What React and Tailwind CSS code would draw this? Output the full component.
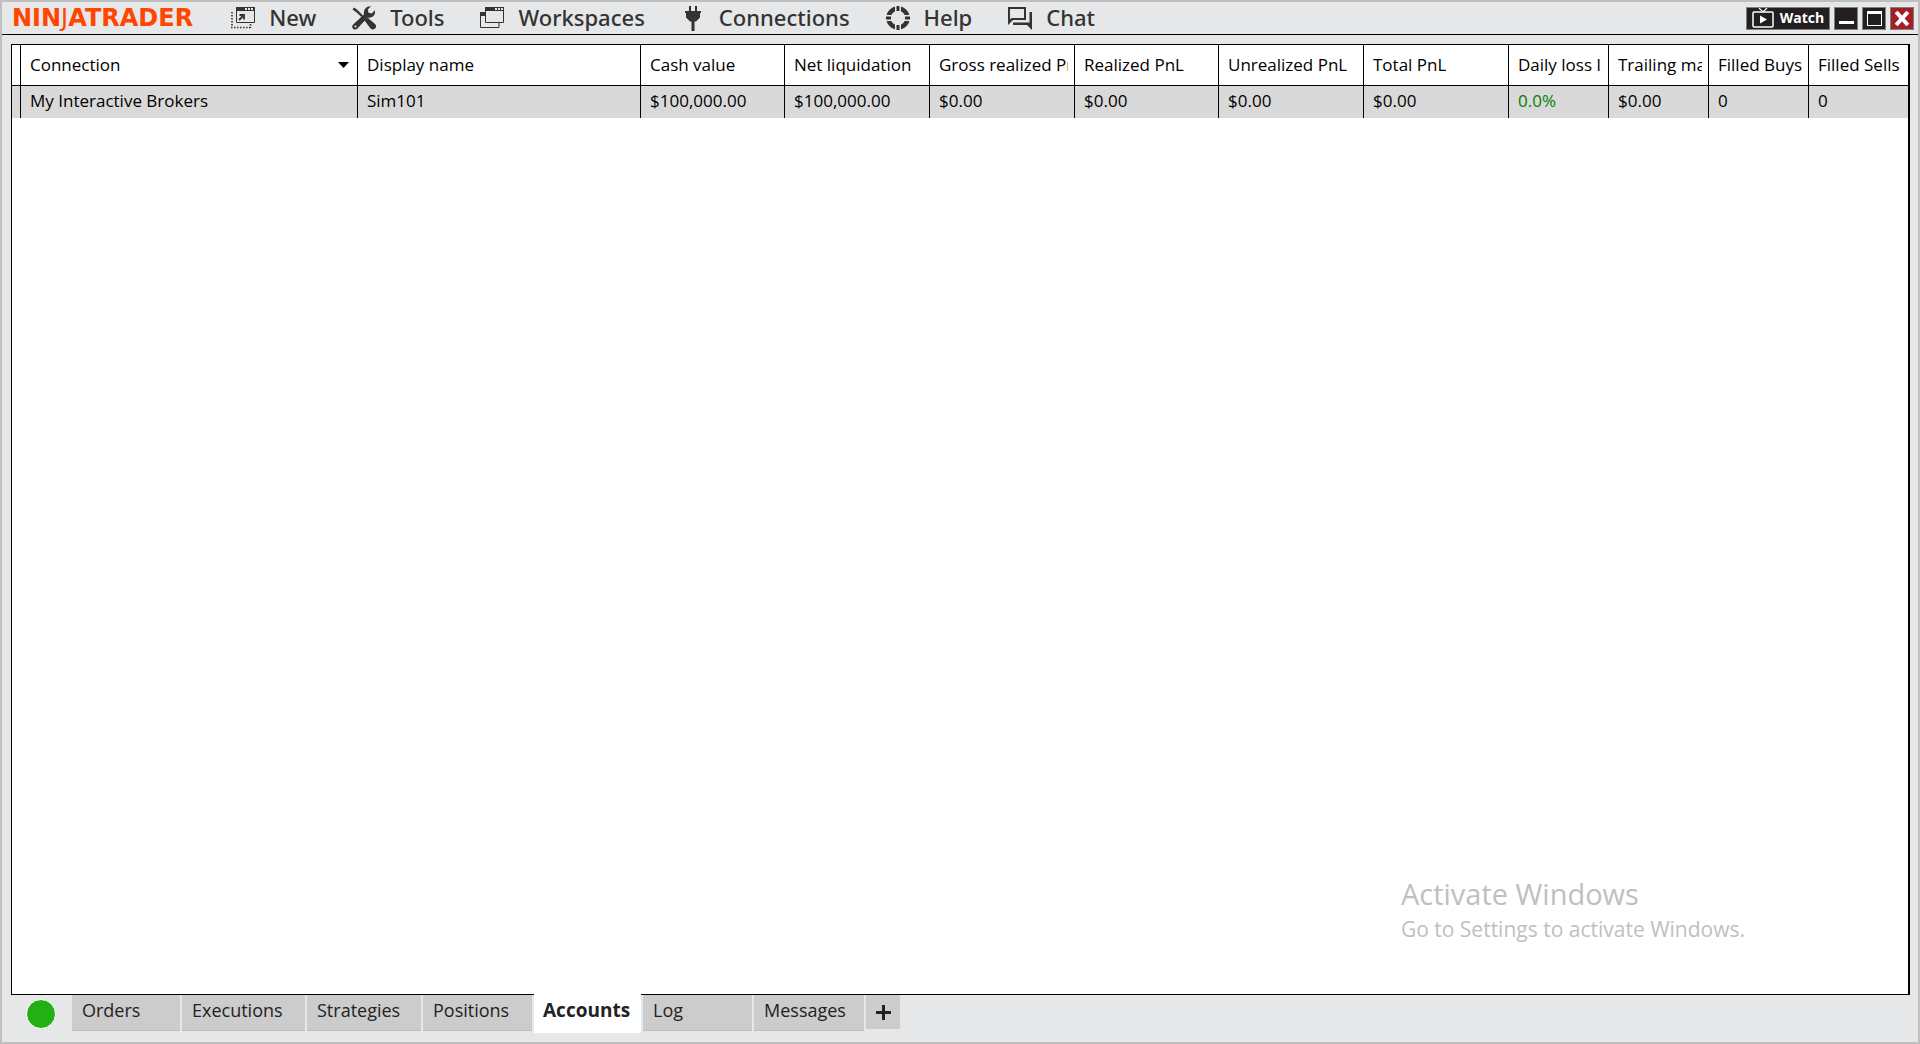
import { useState } from 'react';

function NewIcon() {
  return (
    <svg width="24" height="22" viewBox="0 0 24 22" fill="none" aria-hidden="true">
      <path d="M5.500 1v14.500h18V1z" stroke="#333" />
      <path d="M5 0h19v4H5z" fill="#333" />
      <path d="M14 1h2v2h-2zM17 1h2v2h-2zM20 1h2v2h-2z" fill="#e6e7e8" />
      <path d="M8 13l4.500-4.500M8.500 8H13v4.500" stroke="#333" strokeWidth="1.800" />
      <path d="M1 5v15M0 20.500h20M19.500 17v4" stroke="#333" strokeWidth="1.600" strokeDasharray="1.500 1.500" />
    </svg>
  );
}

function ToolsIcon() {
  return (
    <svg width="24" height="24" viewBox="0 0 24 24" aria-hidden="true">
      <path d="M.5 3.500L2 1.500l3 2L11 9.500l-1.500 1.500L4 6z" fill="#333" />
      <path d="M12.500 14.500l3-3 7.500 6.500a3.100 3.100 0 0 1-4.500 4.500z" fill="#333" />
      <path d="M1.200 18.500L12 8.500C11 4 14.500-.5 19 .3L15.800 3.500l.7 3.200 3.300.8 3-3.200C24.200 8.800 20 12.800 15.500 11.500L5.500 22.600C2.500 25.500-1.800 21.500 1.200 18.500z" fill="#333" />
      <circle cx="3.500" cy="20.500" r="1.100" fill="#e6e7e8" />
    </svg>
  );
}

function WorkspacesIcon() {
  return (
    <svg width="24" height="22" viewBox="0 0 24 22" fill="none" aria-hidden="true">
      <path d="M5 5.500H.5v15h18.500V16" stroke="#333" />
      <path d="M0 5h5v4H0z" fill="#333" />
      <path d="M5.500 1v14.500h18V1z" stroke="#333" />
      <path d="M5 0h19v4H5z" fill="#333" />
      <path d="M15 1h2v2h-2zM18 1h2v2h-2zM21 1h2v2h-2z" fill="#e6e7e8" />
    </svg>
  );
}

function ConnectionsIcon() {
  return (
    <svg width="24" height="25" viewBox="0 0 24 25" fill="#333" aria-hidden="true">
      <path d="M8 0h2v5H8zM14 0h2v5h-2z" />
      <path d="M4 5h16v2h-1v4.500l-4 4h-1.500V25h-3v-9.500H9l-4-4V7H4z" />
    </svg>
  );
}

function HelpIcon() {
  return (
    <svg width="24" height="24" viewBox="0 0 24 24" fill="none" aria-hidden="true">
      <circle cx="12" cy="12" r="9.500" stroke="#333" strokeWidth="4.500" />
      <path d="M12 0v24M0 12h24" stroke="#e6e7e8" strokeWidth="6" />
      <path d="M12 0v5M12 19v5M0 12h5M19 12h5" stroke="#333" strokeWidth="3" />
    </svg>
  );
}

function ChatIcon() {
  return (
    <svg width="24" height="23" viewBox="0 0 24 23" fill="#333" aria-hidden="true">
      <path d="M0 0h18v13H5l-5 5zM2 2v10.500L3.500 11H16V2z" fillRule="evenodd" />
      <path d="M21.500 5H24v18l-5-5H5v-2.500h16.500z" />
    </svg>
  );
}

const menuItems = [
  { label: 'New', Icon: NewIcon },
  { label: 'Tools', Icon: ToolsIcon },
  { label: 'Workspaces', Icon: WorkspacesIcon },
  { label: 'Connections', Icon: ConnectionsIcon },
  { label: 'Help', Icon: HelpIcon },
  { label: 'Chat', Icon: ChatIcon },
];

const columns = [
  { label: 'Connection', value: 'My Interactive Brokers', width: '', sorted: true },
  { label: 'Display name', value: 'Sim101', width: 'w-[283px]' },
  { label: 'Cash value', value: '$100,000.00', width: 'w-[144px]' },
  { label: 'Net liquidation', value: '$100,000.00', width: 'w-[145px]' },
  { label: 'Gross realized PnL', value: '$0.00', width: 'w-[145px]' },
  { label: 'Realized PnL', value: '$0.00', width: 'w-[144px]' },
  { label: 'Unrealized PnL', value: '$0.00', width: 'w-[145px]' },
  { label: 'Total PnL', value: '$0.00', width: 'w-[145px]' },
  { label: 'Daily loss limit', value: '0.0%', width: 'w-[100px]', positive: true },
  { label: 'Trailing max', value: '$0.00', width: 'w-[100px]' },
  { label: 'Filled Buys', value: '0', width: 'w-[100px]' },
  { label: 'Filled Sells', value: '0', width: 'w-[99px]', last: true },
];

const tabs = [
  { label: 'Orders', width: 'w-[108px]' },
  { label: 'Executions', width: 'w-[123px]' },
  { label: 'Strategies', width: 'w-[114px]' },
  { label: 'Positions', width: 'w-[109px]' },
  { label: 'Accounts', width: 'w-[107px]' },
  { label: 'Log', width: 'w-[109px]' },
  { label: 'Messages', width: 'w-[110px]' },
];

function TitleBar() {
  return (
    <header className="flex h-[33px] shrink-0 items-center border-b border-black pl-2.5 pr-1">
      <h1 className="flex items-baseline font-['DejaVu_Sans'] text-2xl leading-8 font-bold text-[#ff4500]">
        NIN<span className="font-normal">J</span>ATRADER
      </h1>
      <nav className="ml-[38px] flex flex-1 gap-9">
        {menuItems.map(({ label, Icon }) => (
          <button key={label} type="button" className="flex items-center gap-3.5 font-['Noto_Sans'] text-[22px] leading-7 font-medium text-[#333]">
            <Icon />
            <span className="pb-0.5">{label}</span>
          </button>
        ))}
      </nav>
      <WindowControls />
    </header>
  );
}

function WindowControls() {
  return (
    <div className="flex gap-1">
      <button type="button" className="flex h-[23px] w-[84px] items-center justify-center gap-1.5 border border-[#808080] bg-[#231f20] text-sm font-bold text-white">
        <svg width="22" height="20" viewBox="0 0 22 20" fill="none" stroke="white" aria-hidden="true">
          <path d="M7 0l4 4 4-4" strokeWidth="1.200" />
          <rect x="1" y="4" width="20" height="15" rx="1" strokeWidth="1.500" />
          <path d="M8 7.500v8l7-4z" fill="white" stroke="none" />
        </svg>
        Watch
      </button>
      <button type="button" aria-label="Minimize" className="h-[23px] w-6 border border-[#808080] bg-[#231f20]">
        <svg width="22" height="21" viewBox="0 0 22 21" aria-hidden="true">
          <path d="M4 13h15v3H4z" fill="white" />
        </svg>
      </button>
      <button type="button" aria-label="Maximize" className="h-[23px] w-6 border border-[#808080] bg-[#231f20]">
        <svg width="22" height="21" viewBox="0 0 22 21" aria-hidden="true">
          <path d="M4 3h15v15H4zM5 6v11h13V6z" fill="white" fillRule="evenodd" />
        </svg>
      </button>
      <button type="button" aria-label="Close" className="h-[23px] w-6 border border-[#808080] bg-[#a61e24]">
        <svg width="22" height="21" viewBox="0 0 22 21" aria-hidden="true">
          <path d="M6.500 5.500l9 10M15.500 5.500l-9 10" stroke="white" strokeWidth="4" strokeLinecap="square" />
        </svg>
      </button>
    </div>
  );
}

function AccountsTable() {
  return (
    <table className="w-full table-fixed border-separate border-spacing-0 text-left text-[17px] leading-6">
      <thead>
        <tr className="h-[41px]">
          <th aria-label="Row marker" className="w-[9px] border-r border-b border-black p-0" />
          {columns.map((col) => (
            <th
              key={col.label}
              className={`border-b border-black py-0 pr-1.5 pl-[9px] font-normal ${col.width} ${col.last ? '' : 'border-r'}`}
            >
              <div className="flex items-center justify-between">
                <span className="overflow-hidden whitespace-nowrap">{col.label}</span>
                {col.sorted && (
                  <svg className="mr-0.5" width="11" height="6" viewBox="0 0 11 6" aria-hidden="true">
                    <path d="M0 0h11L5.500 6z" />
                  </svg>
                )}
              </div>
            </th>
          ))}
        </tr>
      </thead>
      <tbody>
        <tr className="h-8 bg-[#d9d9d9]">
          <td className="border-r border-black p-0" />
          {columns.map((col) => (
            <td
              key={col.label}
              className={`border-black px-[9px] pt-0 pb-0.5 whitespace-nowrap ${col.positive ? 'text-[#008000]' : ''} ${col.last ? '' : 'border-r'}`}
            >
              {col.value}
            </td>
          ))}
        </tr>
      </tbody>
    </table>
  );
}

function TabBar({ active, onSelect }) {
  return (
    <footer className="flex h-[47px] shrink-0 items-start pl-6">
      <span role="img" aria-label="Connected" className="mt-1 mr-4 size-[30px] rounded-full border border-white bg-[#22b014]" />
      <div role="tablist" className="flex gap-0.5">
        {tabs.map((tab) => {
          const isActive = tab.label === active;
          return (
            <button
              key={tab.label}
              type="button"
              role="tab"
              aria-selected={isActive}
              onClick={() => onSelect(tab.label)}
              className={`pb-1.5 text-left text-[#222] ${tab.width} ${
                isActive ? '-mt-px h-[39px] bg-white pl-[9px] text-[19px] font-bold' : 'h-9 border-b border-[#bfbfbf] bg-[#ccc] pl-2.5 text-lg'
              }`}
            >
              {tab.label}
            </button>
          );
        })}
      </div>
      <button type="button" aria-label="Add tab" className="ml-0.5 flex h-[34px] w-[34px] items-center justify-center bg-[#ccc]">
        <svg width="15" height="15" viewBox="0 0 15 15" aria-hidden="true">
          <path d="M6 0h3v6h6v3H9v6H6V9H0V6h6z" fill="#222" />
        </svg>
      </button>
    </footer>
  );
}

export default function App() {
  const [activeTab, setActiveTab] = useState('Accounts');

  return (
    <div className="relative flex h-screen flex-col overflow-hidden border-2 border-[#bfbfbf] bg-[#e6e7e8] font-['Open_Sans','Noto_Sans',sans-serif] text-black">
      <TitleBar />
      <main className="mx-[9px] mt-[9px] mr-2 flex-1 border border-r-2 border-black bg-white">
        <AccountsTable />
      </main>
      <TabBar active={activeTab} onSelect={setActiveTab} />

      {/* System watermark over the lower right corner */}
      <div className="pointer-events-none absolute right-[173px] bottom-[99px] text-[#bfbfbf]">
        <p className="mb-px text-[29px] leading-10">Activate Windows</p>
        <p className="text-[21px] leading-7">Go to Settings to activate Windows.</p>
      </div>
    </div>
  );
}
